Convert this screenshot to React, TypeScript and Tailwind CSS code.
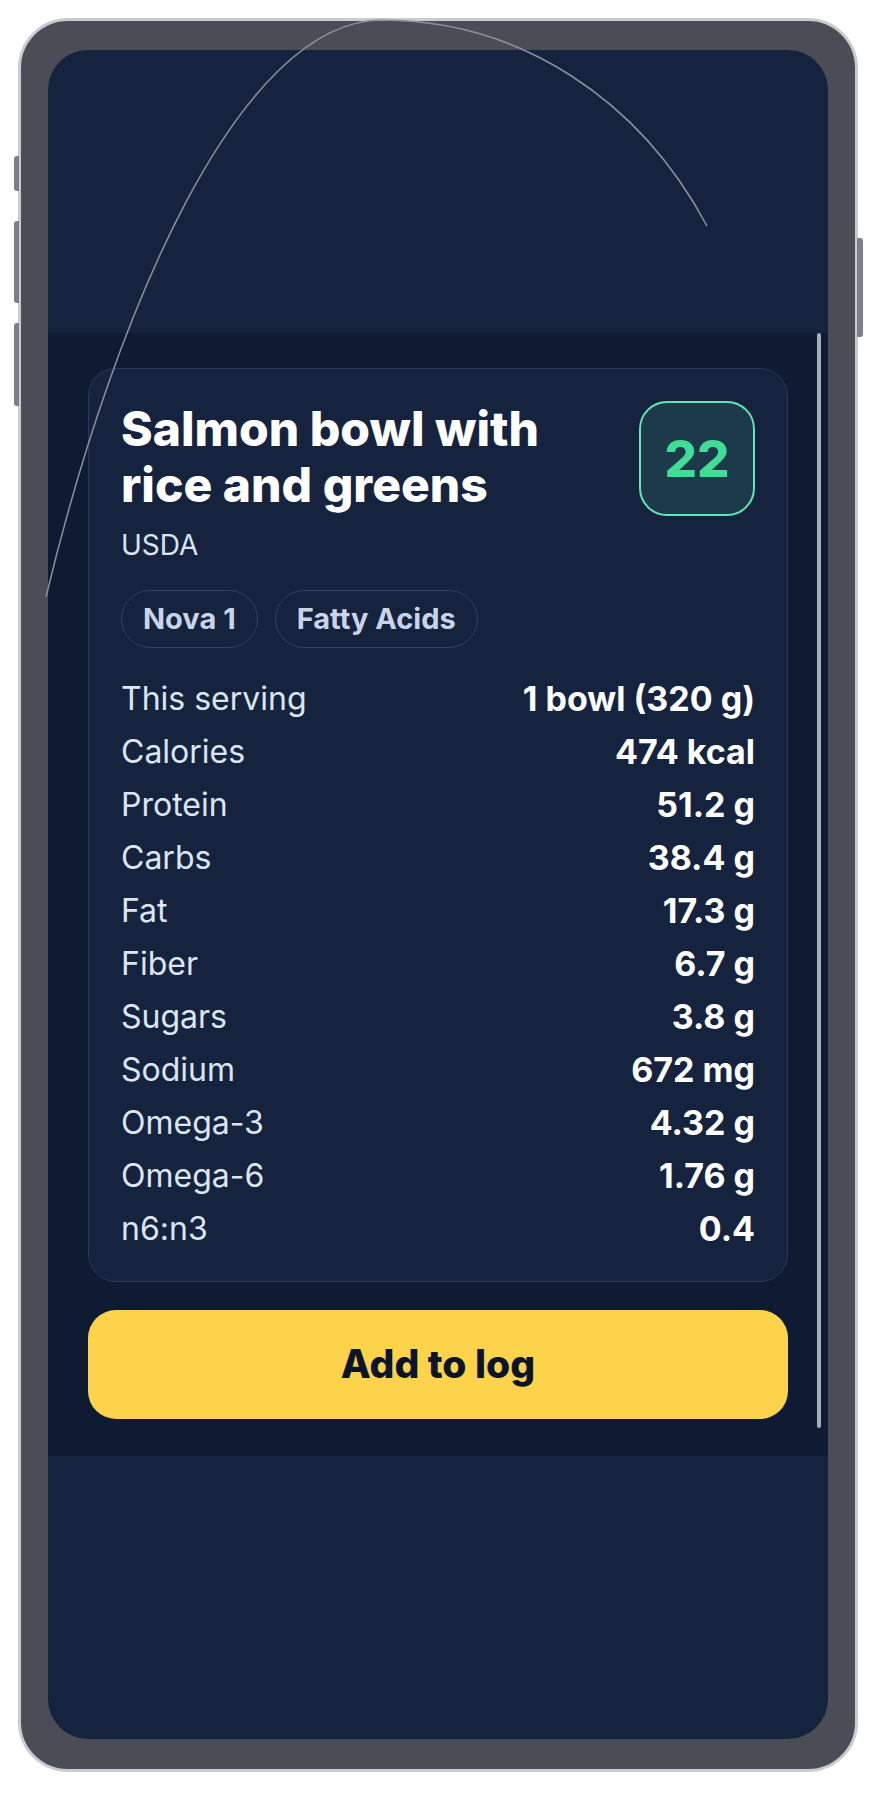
const rows: { label: string; value: string }[] = [
  { label: "This serving", value: "1 bowl (320 g)" },
  { label: "Calories", value: "474 kcal" },
  { label: "Protein", value: "51.2 g" },
  { label: "Carbs", value: "38.4 g" },
  { label: "Fat", value: "17.3 g" },
  { label: "Fiber", value: "6.7 g" },
  { label: "Sugars", value: "3.8 g" },
  { label: "Sodium", value: "672 mg" },
  { label: "Omega-3", value: "4.32 g" },
  { label: "Omega-6", value: "1.76 g" },
  { label: "n6:n3", value: "0.4" },
];

function Chip({ label }: { label: string }) {
  return (
    <div className="h-[58px] px-[21px] flex items-center rounded-full border-[1.5px] border-[#33425f] text-[29px] leading-[34px] font-bold text-[#c9d3ea]">
      {label}
    </div>
  );
}

function FoodCard() {
  return (
    <div className="rounded-[28px] border border-[#2b3a59] bg-[#16233f] p-[32px] flex flex-col">
      <div className="flex justify-between items-start">
        <div className="flex flex-col">
          <div className="text-[48px] leading-[56px] font-extrabold text-white">
            Salmon bowl with
            <br />
            rice and greens
          </div>
          <div className="mt-[16px] text-[28px] leading-[32px] text-[#dbe3f2]">USDA</div>
        </div>
        <div className="w-[116px] h-[115px] rounded-[28px] border-2 border-[#5fe6b2] bg-[#1c3a4a] flex items-center justify-center">
          <span className="text-[51px] leading-none font-extrabold text-[#41dd97]">22</span>
        </div>
      </div>

      <div className="mt-[29px] flex gap-[17px]">
        <Chip label="Nova 1" />
        <Chip label="Fatty Acids" />
      </div>

      <div className="mt-[31px] flex flex-col gap-[13px]">
        {rows.map((r) => (
          <div key={r.label} className="flex justify-between items-center text-[32px] leading-[40px]">
            <span className="text-[#dde5f3]">{r.label}</span>
            <span className="text-[34px] font-bold text-white">{r.value}</span>
          </div>
        ))}
      </div>
    </div>
  );
}

export default function App() {
  return (
    <div className="relative w-[881px] h-[1793px] bg-white font-['Inter','Noto_Sans',sans-serif] overflow-hidden">
      {/* side buttons */}
      <div className="absolute left-[14px] top-[156px] w-[5px] h-[35px] rounded-l-[3px] bg-[#7c7f88]" />
      <div className="absolute left-[14px] top-[221px] w-[5px] h-[82px] rounded-l-[3px] bg-[#7c7f88]" />
      <div className="absolute left-[14px] top-[323px] w-[5px] h-[83px] rounded-l-[3px] bg-[#7c7f88]" />
      <div className="absolute left-[857px] top-[238px] w-[6px] h-[99px] rounded-r-[3px] bg-[#7c7f88]" />

      <div className="ml-[18px] mt-[18px] w-[840px] h-[1754px] rounded-[50px] border-[3px] border-[#c9cbd1] bg-[#4a4d55] pt-[29px] px-[27px] pb-[30px]">
        <div className="h-full rounded-[40px] overflow-hidden bg-[#15233f] flex flex-col">
          <div className="h-[283px] shrink-0" />
          <div className="relative h-[1123px] shrink-0 bg-[#0f1b33] pt-[35px] px-[40px]">
            <FoodCard />
            <button className="mt-[28px] w-full h-[109px] rounded-[28px] bg-[#fdd34c] text-[39px] font-extrabold text-[#0c1527]">
              Add to log
            </button>
            <div className="absolute right-[7px] top-0 w-[4px] h-[1095px] rounded-full bg-[#a9adb8]" />
          </div>
          <div className="flex-1" />
        </div>
      </div>

      <svg className="absolute inset-0 pointer-events-none" width="881" height="1793" viewBox="0 0 881 1793">
        <path
          d="M46 597 C115 310 240 20 382 20 C520 20 640 100 707 226"
          fill="none"
          stroke="#8b909b"
          strokeWidth="1.5"
        />
      </svg>
    </div>
  );
}
